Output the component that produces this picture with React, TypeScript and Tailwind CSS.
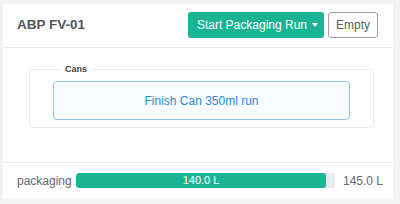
export default function App() {
  const volume = 140.0
  const capacity = 145.0
  const pct = (volume / capacity) * 100

  return (
    <div
      className="h-[204px] w-[400px] bg-[#f3f3f4] pt-[4px] pl-[3px]"
      style={{ fontFamily: '"Liberation Sans", Arial, sans-serif' }}
    >
      <div className="w-[390px] h-[195px] bg-white flex flex-col">
        {/* header */}
        <div className="h-[44px] flex items-center justify-between pl-[14px] pr-[15px] border-b border-[#ececec]">
          <h3 className="text-[13.5px] font-bold text-[#555657]">ABP FV-01</h3>
          <div className="flex items-center gap-[4px] mt-[-2px]">
            <button className="h-[26px] pl-[9px] pr-[6px] rounded-[3px] bg-[#1ab394] text-white text-[12px] flex items-center">
              Start Packaging Run
              <span className="ml-[5px] mt-[1px] border-l-[3px] border-r-[3px] border-t-[4px] border-l-transparent border-r-transparent border-t-white" />
            </button>
            <button className="h-[26px] w-[50px] rounded-[3px] border border-[#a0a0a0] bg-white text-[12px] text-[#5e5e5e]">
              Empty
            </button>
          </div>
        </div>

        {/* body */}
        <div className="h-[115px] pl-[26px] pr-[19px] pt-[16px] border-b border-[#ececec]">
          <fieldset className="border border-dotted border-[#d6d6d6] rounded-[4px] px-[23px] pb-[7px]">
            <legend className="ml-[8px] px-[4px] text-[9px] leading-[10px] font-bold text-[#444]">Cans</legend>
            <button className="mt-[7px] w-full h-[39px] rounded-[4px] border border-[#93c6ee] bg-[#f8fbff] text-[12px] text-[#2a8bd3]">
              Finish Can 350ml run
            </button>
          </fieldset>
        </div>

        {/* footer */}
        <div className="flex-1 flex items-center pl-[14px] pb-[1px]">
          <span className="text-[12px] text-[#666] w-[59px] shrink-0">packaging</span>
          <div className="w-[259px] shrink-0 h-[15px] rounded-[3px] bg-[#e7eaec] overflow-hidden">
            <div
              className="h-full bg-[#1ab394] rounded-[3px] flex items-center justify-center text-[11px] text-white"
              style={{ width: `${pct}%` }}
            >
              {volume.toFixed(1)} L
            </div>
          </div>
          <span className="ml-[8px] text-[12px] text-[#666] whitespace-nowrap">{capacity.toFixed(1)} L</span>
        </div>
      </div>
    </div>
  )
}
